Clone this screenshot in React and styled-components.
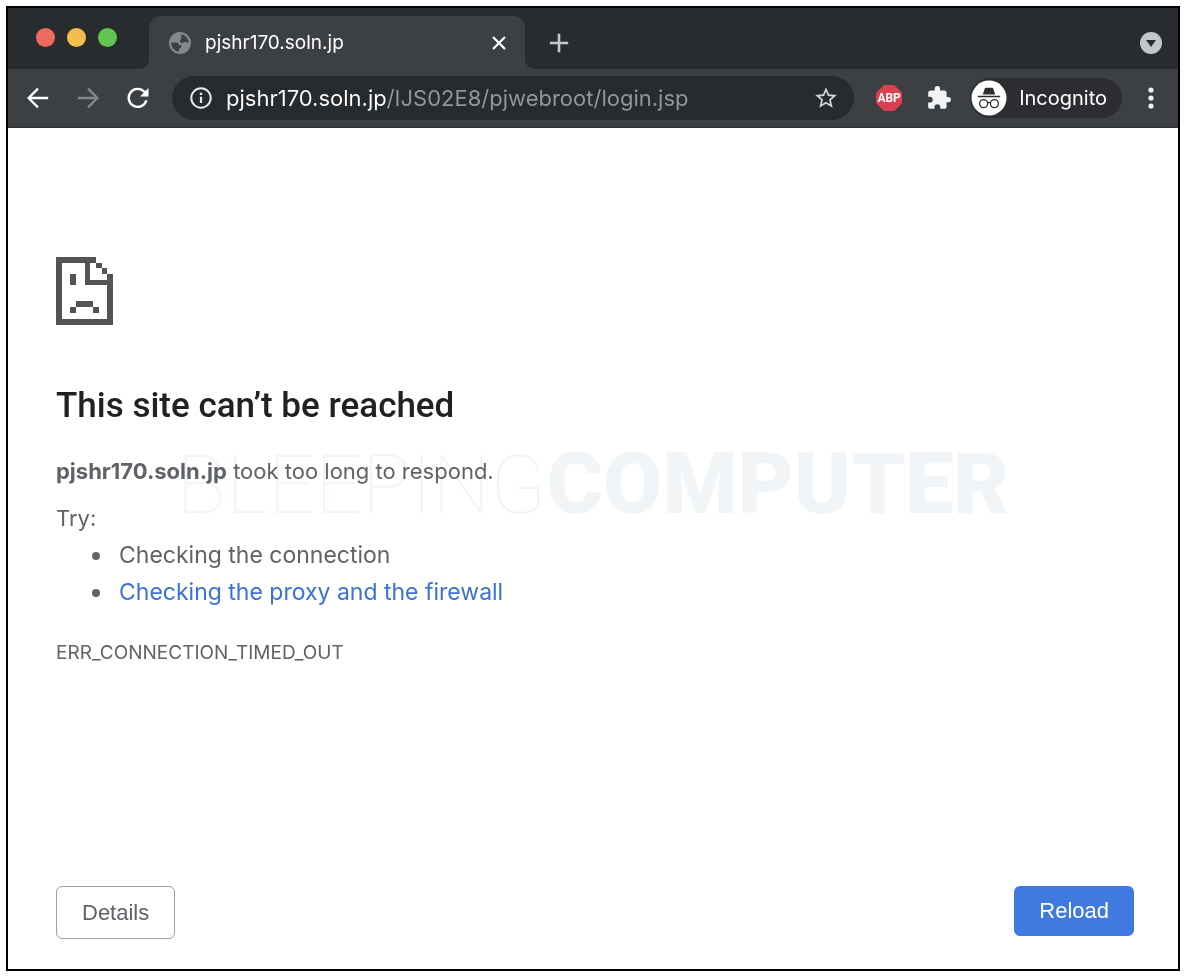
import React, { useState } from 'react';
import styled, { createGlobalStyle } from 'styled-components';

const GlobalStyle = createGlobalStyle`
  * {
    box-sizing: border-box;
  }
  body {
    margin: 0;
    background-color: #fff;
    font-family: Inter, 'Liberation Sans', sans-serif;
  }
  button {
    font-family: inherit;
    cursor: pointer;
  }
`;

const Screen = styled.div`
  display: flex;
  min-height: 100vh;
  padding: 6px 8px 5px 6px;
`;

const BrowserWindow = styled.div`
  display: flex;
  flex-direction: column;
  flex: 1;
  min-width: 0;
  border: 2px solid #000;
  background-color: #fff;
`;

const TabStrip = styled.div`
  display: flex;
  align-items: flex-end;
  height: 61px;
  padding-right: 16px;
  background-color: #292c2f;
`;

const TrafficLights = styled.div`
  display: flex;
  align-items: center;
  gap: 12px;
  height: 61px;
  padding: 0 32px 2px 28px;
`;

const Light = styled.button`
  width: 19px;
  height: 19px;
  padding: 0;
  border: none;
  border-radius: 50%;
  background-color: ${(props) => props.$color};
`;

const Tab = styled.div`
  position: relative;
  display: flex;
  align-items: center;
  gap: 14px;
  width: 376px;
  height: 53px;
  padding: 0 16px 0 20px;
  border-radius: 12px 12px 0 0;
  background-color: #3d4043;

  &::before,
  &::after {
    content: '';
    position: absolute;
    bottom: 0;
    width: 10px;
    height: 10px;
  }
  &::before {
    left: -10px;
    background: radial-gradient(circle at 0 0, transparent 10px, #3d4043 10px);
  }
  &::after {
    right: -10px;
    background: radial-gradient(circle at 100% 0, transparent 10px, #3d4043 10px);
  }
`;

const TabTitle = styled.span`
  flex: 1;
  font-size: 19px;
  color: #fff;
`;

const IconButton = styled.button`
  display: flex;
  align-items: center;
  justify-content: center;
  flex-shrink: 0;
  width: ${(props) => props.$width || 24}px;
  height: ${(props) => props.$height || 24}px;
  padding: 0;
  border: none;
  background: none;
`;

const TabStripActions = styled.div`
  display: flex;
  flex: 1;
  align-items: center;
  justify-content: space-between;
  height: 53px;
  padding-left: 22px;
`;

const Toolbar = styled.div`
  display: flex;
  align-items: center;
  height: 59px;
  padding: 0 15px 0 16px;
  background-color: #3d4043;
  border-bottom: 1px solid #2b2d30;
`;

const NavButtons = styled.div`
  display: flex;
  gap: 22px;
  margin-right: 20px;
`;

const AddressBar = styled.div`
  display: flex;
  flex: 1;
  align-items: center;
  gap: 13px;
  min-width: 0;
  height: 44px;
  padding: 0 15px 0 17px;
  border-radius: 22px;
  background-color: #282b2e;
`;

const AddressInput = styled.input`
  flex: 1;
  min-width: 0;
  padding: 0;
  border: none;
  outline: none;
  font-family: inherit;
  font-size: 22px;
  color: #fff;
  background: linear-gradient(90deg, #fff 162px, #94979a 162px);
  -webkit-background-clip: text;
  background-clip: text;
  -webkit-text-fill-color: transparent;
`;

const Extensions = styled.div`
  display: flex;
  align-items: center;
  gap: 23px;
  margin: 0 18px 0 21px;
`;

const Incognito = styled.button`
  display: flex;
  align-items: center;
  gap: 12px;
  height: 40px;
  margin-right: 17px;
  padding: 0 15px 0 1px;
  border: none;
  border-radius: 20px;
  font-size: 20px;
  color: #fff;
  background-color: #2d2c31;
`;

const ErrorPage = styled.main`
  position: relative;
  display: flex;
  flex-direction: column;
  flex: 1;
  padding: 129px 44px 30px 48px;
  color: #5f6368;
`;

const Title = styled.h1`
  margin: 57px 0 22px;
  font-family: Roboto, sans-serif;
  font-size: 35px;
  line-height: 48px;
  font-weight: 500;
  color: #202124;
`;

const Text = styled.p`
  margin: 0 0 9px;
  font-size: 22px;
  line-height: 38px;
`;

const TryLabel = styled(Text)`
  margin: 0;
`;

const Suggestions = styled.ul`
  margin: 0;
  padding-left: 63px;
  font-size: 23px;
  line-height: 37px;
  list-style: none;

  li::before {
    content: '';
    display: inline-block;
    width: 8px;
    height: 8px;
    margin: 0 19px 2px -27px;
    border-radius: 50%;
    vertical-align: middle;
    background-color: #5f6368;
  }
`;

const Link = styled.a`
  color: #3a72d8;
  text-decoration: none;
`;

const ErrorCode = styled.p`
  margin: 28px 0 0;
  font-size: 19px;
  line-height: 28px;
`;

const Buttons = styled.div`
  display: flex;
  align-items: flex-start;
  justify-content: space-between;
  margin-top: auto;
`;

const PageButton = styled.button`
  height: ${(props) => (props.$primary ? 50 : 53)}px;
  padding: 0 25px;
  border: ${(props) => (props.$primary ? 'none' : '1px solid #9aa0a6')};
  border-radius: 6px;
  && {
    font-family: 'Liberation Sans', sans-serif;
  }
  font-size: 22px;
  color: ${(props) => (props.$primary ? '#fff' : '#5f6368')};
  background-color: ${(props) => (props.$primary ? '#4079e0' : '#fff')};
`;

const Watermark = styled.div`
  position: absolute;
  top: 300px;
  left: 0;
  right: 0;
  display: flex;
  justify-content: center;
  align-items: baseline;
  font-family: Roboto, sans-serif;
  font-size: 82px;
  line-height: 112px;
  font-weight: 100;
  color: #f2f5f7;
  mix-blend-mode: multiply;
  pointer-events: none;

  strong {
    font-size: 86px;
    font-weight: 900;
  }
`;

function GlobeIcon() {
  return (
    <svg width="22" height="22" viewBox="0 0 22 22">
      <circle cx="11" cy="11" r="11" fill="#85888b" />
      <path d="M12.2 2.3a9 9 0 0 1 7.6 9.2c-1-.9-1.8-1.6-3.4-1.5-1.8.1-2.4 1.2-3.9.8-1.7-.4-2.2-1.9-1-2.8 1.4-1 .2-1.9.9-2.9.5-.8-.4-1.7-.2-2.8z" fill="#3d4043" />
      <path d="M2.2 10.5h5c2.4 0 2.6 1.5 2.8 2.7h2.6c.5 2.2-.9 2.8-2.5 3v3.5a8.8 8.8 0 0 1-7.9-9.2z" fill="#3d4043" />
    </svg>
  );
}

function CloseIcon() {
  return (
    <svg width="14" height="14" viewBox="0 0 14 14" stroke="#fff" strokeWidth="2.2">
      <path d="M1 1l12 12M13 1L1 13" />
    </svg>
  );
}

function PlusIcon() {
  return (
    <svg width="20" height="20" viewBox="0 0 20 20" stroke="#c6c9cc" strokeWidth="2.6">
      <path d="M10 .8v18.4M.8 10h18.4" />
    </svg>
  );
}

function TabSearchIcon() {
  return (
    <svg width="22" height="22" viewBox="0 0 22 22">
      <circle cx="11" cy="11" r="11" fill="#c3c5cf" />
      <path d="M6 8h10L11 15z" fill="#292c2f" />
    </svg>
  );
}

function ArrowIcon({ color, forward }) {
  return (
    <svg width="22" height="22" viewBox="0 0 22 22" fill="none" stroke={color} strokeWidth="2.3">
      <path d={forward ? 'M.8 11h19M11 1.6l9.4 9.4-9.4 9.4' : 'M21.2 11h-19M11 1.6L1.6 11l9.4 9.4'} />
    </svg>
  );
}

function ReloadIcon() {
  return (
    <svg width="22" height="22" viewBox="0 0 22 22">
      <path d="M19.4 13.2A9 9 0 1 1 17.4 4.8L19 6.8" fill="none" stroke="#fff" strokeWidth="2.4" />
      <path d="M21.5 1v8.5H13z" fill="#fff" />
    </svg>
  );
}

function InfoIcon() {
  return (
    <svg width="22" height="22" viewBox="0 0 22 22">
      <circle cx="11" cy="11" r="9.7" fill="none" stroke="#e8eaed" strokeWidth="2" />
      <path d="M11 9.8v6.2M11 5.8v2.3" stroke="#e8eaed" strokeWidth="2.2" />
    </svg>
  );
}

function StarIcon() {
  return (
    <svg width="26" height="26" viewBox="0 0 24 24">
      <path d="M22 9.24l-7.19-.62L12 2 9.19 8.63 2 9.24l5.46 4.73L5.82 21 12 17.27 18.18 21l-1.63-7.03L22 9.24zM12 15.4l-3.76 2.27 1-4.28-3.32-2.88 4.38-.38L12 6.1l1.71 4.04 4.38.38-3.32 2.88 1 4.28L12 15.4z" fill="#d2d4d8" />
    </svg>
  );
}

const AdBlockBadge = styled.span`
  display: flex;
  align-items: center;
  justify-content: center;
  width: 26px;
  height: 26px;
  clip-path: polygon(30% 0, 70% 0, 100% 30%, 100% 70%, 70% 100%, 30% 100%, 0 70%, 0 30%);
  font-family: Roboto, sans-serif;
  font-size: 12px;
  font-weight: 700;
  color: #fff;
  background-color: #dc3f50;
`;

function PuzzleIcon() {
  return (
    <svg width="26" height="26" viewBox="0 0 24 24">
      <path d="M20.5 11H19V7c0-1.1-.9-2-2-2h-4V3.5a2.5 2.5 0 0 0-5 0V5H4c-1.1 0-1.99.9-1.99 2v3.8H3.5a2.7 2.7 0 0 1 0 5.4H2V20c0 1.1.9 2 2 2h3.8v-1.5a2.7 2.7 0 0 1 5.4 0V22H17c1.1 0 2-.9 2-2v-4h1.5a2.5 2.5 0 0 0 0-5z" fill="#f1f3f4" />
    </svg>
  );
}

function IncognitoIcon() {
  return (
    <svg width="36" height="36" viewBox="0 0 36 36">
      <circle cx="18" cy="18" r="17.5" fill="#fff" />
      <path d="M11.8 14.4l2-6c.1-.4.4-.6.8-.6h6.8c.4 0 .7.2.8.6l2 6zM6.8 15.8h22.4v1.4H6.8z" fill="#2b2d30" />
      <g fill="none" stroke="#2b2d30" strokeWidth="1.3">
        <circle cx="12.6" cy="23.6" r="4" />
        <circle cx="23.4" cy="23.6" r="4" />
        <path d="M16.4 23c1-.8 2.2-.8 3.2 0" />
      </g>
    </svg>
  );
}

function MenuIcon() {
  return (
    <svg width="6" height="22" viewBox="0 0 6 22" fill="#f1f3f4">
      <circle cx="3" cy="3" r="2.6" />
      <circle cx="3" cy="11" r="2.6" />
      <circle cx="3" cy="19" r="2.6" />
    </svg>
  );
}

function SadPageIcon() {
  return (
    <svg width="57" height="68" viewBox="0 0 20 24" fill="#545454" shapeRendering="crispEdges">
      <path d="M0 0h14v2H2v20h16V10h-8V2h2v6h6V6h2v18H0z" />
      <path d="M14 2h2v2h-2zM16 4h2v2h-2zM5 6h2v4H5zM7 15.6h6v2H7zM5 17.6h2v2H5zM13 17.6h2v2h-2z" />
    </svg>
  );
}

function App() {
  const [address, setAddress] = useState('pjshr170.soln.jp/IJS02E8/pjwebroot/login.jsp');

  return (
    <Screen>
      <GlobalStyle />
      <BrowserWindow>
        <TabStrip>
          <TrafficLights>
            <Light $color="#ee6a5f" aria-label="Close window" />
            <Light $color="#f5bd4f" aria-label="Minimize window" />
            <Light $color="#61c554" aria-label="Zoom window" />
          </TrafficLights>
          <Tab>
            <GlobeIcon />
            <TabTitle>pjshr170.soln.jp</TabTitle>
            <IconButton $width={20} aria-label="Close tab"><CloseIcon /></IconButton>
          </Tab>
          <TabStripActions>
            <IconButton aria-label="New tab"><PlusIcon /></IconButton>
            <IconButton $width={22} aria-label="Search tabs"><TabSearchIcon /></IconButton>
          </TabStripActions>
        </TabStrip>

        <Toolbar>
          <NavButtons>
            <IconButton $width={28} aria-label="Back"><ArrowIcon color="#fff" /></IconButton>
            <IconButton $width={28} aria-label="Forward"><ArrowIcon color="#85888b" forward /></IconButton>
            <IconButton $width={28} aria-label="Reload page"><ReloadIcon /></IconButton>
          </NavButtons>
          <AddressBar>
            <IconButton $width={24} aria-label="Site information"><InfoIcon /></IconButton>
            <AddressInput
              type="text"
              aria-label="Address"
              spellCheck={false}
              value={address}
              onChange={(e) => setAddress(e.target.value)}
            />
            <IconButton $width={26} aria-label="Bookmark"><StarIcon /></IconButton>
          </AddressBar>
          <Extensions>
            <IconButton $width={28} $height={28} aria-label="Adblock Plus"><AdBlockBadge>ABP</AdBlockBadge></IconButton>
            <IconButton $width={26} $height={26} aria-label="Extensions"><PuzzleIcon /></IconButton>
          </Extensions>
          <Incognito>
            <IncognitoIcon />
            Incognito
          </Incognito>
          <IconButton aria-label="Menu"><MenuIcon /></IconButton>
        </Toolbar>

        <ErrorPage>
          <SadPageIcon />
          <Title>This site can’t be reached</Title>
          <Text><b>pjshr170.soln.jp</b> took too long to respond.</Text>
          <TryLabel>Try:</TryLabel>
          <Suggestions>
            <li>Checking the connection</li>
            <li><Link href="#proxy">Checking the proxy and the firewall</Link></li>
          </Suggestions>
          <ErrorCode>ERR_CONNECTION_TIMED_OUT</ErrorCode>
          <Buttons>
            <PageButton>Details</PageButton>
            <PageButton $primary>Reload</PageButton>
          </Buttons>
          <Watermark>
            <span>BLEEPING</span>
            <strong>COMPUTER</strong>
          </Watermark>
        </ErrorPage>
      </BrowserWindow>
    </Screen>
  );
}

export default App;
